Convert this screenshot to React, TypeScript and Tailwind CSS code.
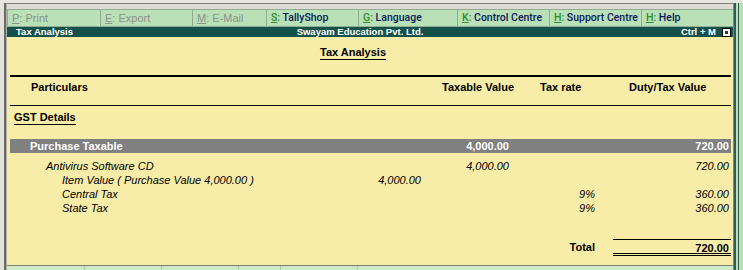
import React from "react";

const font = { fontFamily: '"Liberation Sans", Arial, sans-serif' };

function Btn({ k, label, active, w }: { k: string; label: string; active?: boolean; w: string }) {
  return (
    <div className={`${w} h-full flex items-center pl-[4px] border-r border-[#8fae8f] shrink-0 overflow-hidden`}>
      {active ? (
        <span
          style={{ fontFamily: 'Roboto, "Liberation Sans", sans-serif' }}
          className="text-[10.5px] font-medium text-[#0b1a5c] whitespace-nowrap"
        >
          <span className="underline text-[#2d8f2d]">{k}</span>
          <span className="text-[#2d8f2d]">:</span> {label}
        </span>
      ) : (
        <span className="text-[11px] text-[#8a948a] whitespace-nowrap">
          <span className="underline">{k}</span>: {label}
        </span>
      )}
    </div>
  );
}

const grid = "grid grid-cols-[360px_55px_90px_85px_131px]";

export default function App() {
  return (
    <div style={font} className="w-[743px] h-[270px] bg-[#e2e2da] overflow-hidden flex flex-col">
      <div className="h-[3px] bg-[#e6e6de] shrink-0" />
      <div className="flex flex-1 min-h-0">
        <div className="w-[4px] bg-[#e2e2da] shrink-0" />
        <div className="w-[2px] bg-[#6a6a66] shrink-0" />
        <div className="w-[1px] bg-[#b0b0a8] shrink-0" />
        <div className="w-[726px] flex flex-col shrink-0 border-t border-[#7a7a76]">
          <div className="h-[5px] bg-[#dcdcd4] shrink-0" />
          {/* button bar */}
          <div className="h-[18px] flex bg-[#b9e0b7] border-y border-[#8fae8f] border-l shrink-0">
            <Btn k="P" label="Print" w="w-[93px]" />
            <Btn k="E" label="Export" w="w-[92px]" />
            <Btn k="M" label="E-Mail" w="w-[74px]" />
            <Btn k="S" label="TallyShop" active w="w-[92px]" />
            <Btn k="G" label="Language" active w="w-[99px]" />
            <Btn k="K" label="Control Centre" active w="w-[92px]" />
            <Btn k="H" label="Support Centre" active w="w-[92px]" />
            <Btn k="H" label="Help" active w="w-[92px]" />
          </div>
          {/* title bar */}
          <div className="h-[10px] bg-[#14514a] flex items-center text-white text-[9.5px] font-bold leading-none shrink-0">
            <div className="w-[283px] pl-[9px]">Tax Analysis</div>
            <div className="w-[140px] text-center">Swayam Education Pvt. Ltd.</div>
            <div className="flex-1 flex justify-end items-center pr-[2px]">
              <span className="mr-[6px]">Ctrl + M</span>
              <span className="w-[9px] h-[9px] bg-white border border-black flex items-center justify-center">
                <span className="w-[3px] h-[3px] bg-[#333]" />
              </span>
            </div>
          </div>
          {/* body */}
          <div className="flex-1 bg-[#f8eda8] text-black text-[11px] leading-[14px] border-b border-[#7c7c70] pl-[3px] pr-[2px] flex flex-col">
            <div className="h-[9px]" />
            <div className="flex pl-[310px]">
              <span className="font-bold border-b border-black leading-[13px]">Tax Analysis</span>
            </div>
            <div className="h-[15px]" />
            <div className="h-[2px] bg-black" />
            <div className={`${grid} font-bold h-[28px] pt-[3px]`}>
              <div className="pl-[21px]">Particulars</div>
              <div />
              <div className="text-right pr-[1px]">Taxable Value</div>
              <div className="pl-[25px]">Tax rate</div>
              <div className="pl-[29px]">Duty/Tax Value</div>
            </div>
            <div className="h-[1px] bg-black" />
            <div className="h-[5px]" />
            <div className="flex pl-[4px]">
              <span className="font-bold border-b border-black leading-[12px] pb-[1px]">GST Details</span>
            </div>
            <div className="h-[14px]" />
            <div className={`${grid} bg-[#808080] text-white font-bold h-[14px] items-center`}>
              <div className="pl-[20px]">Purchase Taxable</div>
              <div />
              <div className="text-right pr-[6px]">4,000.00</div>
              <div />
              <div className="text-right pr-[2px]">720.00</div>
            </div>
            <div className="h-[6px]" />
            <div className="italic">
              <div className={grid}>
                <div className="pl-[36px]">Antivirus Software CD</div>
                <div />
                <div className="text-right pr-[6px]">4,000.00</div>
                <div />
                <div className="text-right pr-[2px]">720.00</div>
              </div>
              <div className={grid}>
                <div className="pl-[52px]">Item Value ( Purchase Value 4,000.00 )</div>
                <div className="text-right pr-[4px]">4,000.00</div>
                <div />
                <div />
                <div />
              </div>
              <div className={grid}>
                <div className="pl-[52px]">Central Tax</div>
                <div />
                <div />
                <div className="text-right pr-[5px]">9%</div>
                <div className="text-right pr-[2px]">360.00</div>
              </div>
              <div className={grid}>
                <div className="pl-[52px]">State Tax</div>
                <div />
                <div />
                <div className="text-right pr-[5px]">9%</div>
                <div className="text-right pr-[2px]">360.00</div>
              </div>
            </div>
            <div className="h-[24px]" />
            <div className={`${grid} font-bold`}>
              <div />
              <div />
              <div />
              <div className="text-right pr-[5px] pt-[1px]">Total</div>
              <div className="pl-[13px]">
                <div className="border-t border-black pt-[1px] text-right pr-[2px] h-[14px]">720.00</div>
                <div className="h-[1px] bg-black" />
                <div className="h-[1px]" />
                <div className="h-[1px] bg-black" />
              </div>
            </div>
          </div>
          <div className="h-[4px] bg-[#cfe9cb] flex shrink-0">
            <div className="w-[78px] border-r border-[#a8c8a4]" />
            <div className="w-[77px] border-r border-[#a8c8a4]" />
            <div className="w-[77px] border-r border-[#a8c8a4]" />
            <div className="w-[42px] border-r border-[#a8c8a4]" />
            <div className="w-[77px] border-r border-[#a8c8a4]" />
          </div>
        </div>
        <div className="w-[1px] bg-[#6f8f88] shrink-0" />
        <div className="flex-1 bg-[#2c5c52] flex">
          <div className="w-[2px] bg-[#b9e0b7] ml-[2px]" />
          <div className="flex-1 bg-[#b9e0b7] ml-[1px]" />
        </div>
      </div>
    </div>
  );
}
